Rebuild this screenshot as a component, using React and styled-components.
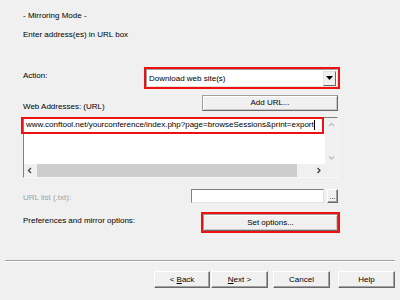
import React from "react";
import styled, { createGlobalStyle } from "styled-components";

const Global = createGlobalStyle`
  html, body { margin: 0; padding: 0; background: #f0f0f0; }
  body {
    font-family: "Liberation Sans", Arial, sans-serif;
    font-size: 8px;
    color: #000;
  }
  * { box-sizing: border-box; }
`;

const Page = styled.div`
  width: 400px;
  height: 300px;
  display: flex;
  flex-direction: column;
  overflow: hidden;
`;

const Content = styled.div`
  padding: 11px 0 0 23px;
  width: 338px;
  display: flex;
  flex-direction: column;
`;

const Text = styled.div`
  line-height: 10px;
  height: 10px;
  margin-top: ${(p) => p.$mt || 0}px;
  white-space: nowrap;
`;

const Row = styled.div`
  display: flex;
  justify-content: space-between;
  height: ${(p) => p.$h}px;
  margin-top: ${(p) => p.$mt}px;
`;

const Label = styled.div`
  white-space: nowrap;
  align-self: ${(p) => (p.$bottom ? "flex-end" : "flex-start")};
  line-height: ${(p) => p.$lh}px;
  color: ${(p) => (p.$disabled ? "#a0a0a0" : "#000")};
`;

const Combo = styled.div`
  width: 192px;
  height: 18px;
  background: #fff;
  border: 1px solid;
  border-color: #a0a0a0 #e3e3e3 #e3e3e3 #a0a0a0;
  outline: 2px solid #ee1111;
  display: flex;
  align-items: center;
  padding: 0 1px 0 2px;
`;

const ComboText = styled.div`
  flex: 1;
  white-space: nowrap;
`;

const DropButton = styled.div`
  width: 13px;
  height: 15px;
  background: #f0f0f0;
  border: 1px solid;
  border-color: #e3e3e3 #696969 #696969 #e3e3e3;
  display: flex;
  align-items: center;
  justify-content: center;
`;

const Button = styled.div`
  width: ${(p) => p.$w}px;
  height: ${(p) => p.$h || 17}px;
  margin-left: ${(p) => p.$ml || 0}px;
  background: #f0f0f0;
  border: 1px solid;
  border-color: #ffffff #696969 #696969 #ffffff;
  box-shadow: inset -1px -1px #a0a0a0;
  outline: ${(p) => (p.$hl ? "2px solid #ee1111" : "none")};
  outline-offset: ${(p) => (p.$hl ? "0px" : "0")};
  display: flex;
  align-items: center;
  justify-content: center;
  white-space: nowrap;
  line-height: 10px;
`;

const FlatButton = styled(Button)`
  border-color: #a0a0a0 #696969 #696969 #a0a0a0;
  box-shadow: inset 1px 1px #ffffff, inset -1px -1px #c8c8c8;
`;

const Edit = styled.div`
  position: relative;
  margin-top: 6px;
  width: 315px;
  height: 61px;
  background: #fff;
  border: 1px solid;
  border-color: #808080 #f8f8f8 #f8f8f8 #808080;
  display: grid;
  grid-template-columns: 1fr 12px;
  grid-template-rows: 1fr 13px;
`;

const EditText = styled.div`
  padding-left: 2px;
  line-height: 14px;
  white-space: nowrap;
  overflow: hidden;
  display: flex;
  align-items: flex-start;
`;

const Caret = styled.span`
  display: inline-block;
  width: 1px;
  height: 10px;
  margin-top: 2px;
  background: #000;
`;

const Highlight = styled.div`
  position: absolute;
  left: -3px;
  top: -1px;
  width: 303px;
  height: 17px;
  border: 2px solid #ee1111;
  pointer-events: none;
`;

const VScroll = styled.div`
  background: #f0f0f0;
  display: flex;
  flex-direction: column;
  justify-content: space-between;
`;

const HScroll = styled.div`
  background: #f0f0f0;
  display: flex;
  align-items: stretch;
`;

const ArrowBox = styled.div`
  width: ${(p) => p.$w || 12}px;
  height: ${(p) => p.$h || 13}px;
  display: flex;
  align-items: center;
  justify-content: center;
  flex: none;
`;

const Track = styled.div`
  flex: 1;
  display: flex;
  align-items: stretch;
`;

const Thumb = styled.div`
  margin-left: 1px;
  width: 260px;
  background: #cdcdcd;
`;

const Corner = styled.div`
  background: #f0f0f0;
`;

const Field = styled.div`
  width: 133px;
  height: 14px;
  background: #fff;
  border: 1px solid;
  border-color: #808080 #e3e3e3 #e3e3e3 #808080;
`;

const FieldGroup = styled.div`
  display: flex;
  gap: 3px;
`;

const SmallButton = styled(Button)`
  width: 11px;
  height: 14px;
  align-items: flex-end;
  padding-bottom: 2px;
  font-size: 7px;
  line-height: 7px;
`;

const Separator = styled.div`
  margin: 29px 5px 0 5px;
  height: 2px;
  border-top: 1px solid #a0a0a0;
  border-bottom: 1px solid #ffffff;
`;

const Footer = styled.div`
  display: flex;
  justify-content: flex-end;
  padding-right: 5px;
  margin-top: 9px;
`;

const U = styled.span`
  text-decoration: underline;
`;

const Chevron = ({ dir, color }) => {
  const paths = {
    up: "M1 4 L3.5 1.5 L6 4",
    down: "M1 1.5 L3.5 4 L6 1.5",
    left: "M4 1 L1.5 3.5 L4 6",
    right: "M1.5 1 L4 3.5 L1.5 6",
  };
  const vertical = dir === "up" || dir === "down";
  return (
    <svg width={vertical ? 7 : 6} height={vertical ? 6 : 7} viewBox={vertical ? "0 0 7 6" : "0 0 6 7"}>
      <path d={paths[dir]} fill="none" stroke={color} strokeWidth="1.3" />
    </svg>
  );
};

export default function App() {
  return (
    <Page>
      <Global />
      <Content>
        <Text>- Mirroring Mode -</Text>
        <Text $mt={9}>Enter address(es) in URL box</Text>

        <Row $h={18} $mt={29}>
          <Label $lh={14}>Action:</Label>
          <Combo>
            <ComboText>Download web site(s)</ComboText>
            <DropButton>
              <svg width="7" height="4" viewBox="0 0 7 4">
                <path d="M0 0 H7 L3.5 4 Z" fill="#000" />
              </svg>
            </DropButton>
          </Combo>
        </Row>

        <Row $h={16} $mt={8}>
          <Label $bottom $lh={8}>Web Addresses: (URL)</Label>
          <FlatButton $w={136} $h={16}>Add URL...</FlatButton>
        </Row>

        <Edit>
          <EditText>
            www.conftool.net/yourconference/index.php?page=browseSessions&amp;print=export
            <Caret />
          </EditText>
          <VScroll>
            <ArrowBox $w={12} $h={13}>
              <Chevron dir="up" color="#bfbfbf" />
            </ArrowBox>
            <ArrowBox $w={12} $h={13}>
              <Chevron dir="down" color="#bfbfbf" />
            </ArrowBox>
          </VScroll>
          <HScroll>
            <ArrowBox>
              <Chevron dir="left" color="#404040" />
            </ArrowBox>
            <Track>
              <Thumb />
            </Track>
            <ArrowBox>
              <Chevron dir="right" color="#404040" />
            </ArrowBox>
          </HScroll>
          <Corner />
          <Highlight />
        </Edit>

        <Row $h={14} $mt={11}>
          <Label $bottom $lh={10} $disabled>URL list (.txt):</Label>
          <FieldGroup>
            <Field />
            <SmallButton>...</SmallButton>
          </FieldGroup>
        </Row>

        <Row $h={17} $mt={11}>
          <Label $lh={14}>Preferences and mirror options:</Label>
          <FlatButton $w={135} $h={17} $hl>Set options...</FlatButton>
        </Row>
      </Content>

      <Separator />

      <Footer>
        <Button $w={56}>&lt;&nbsp;<U>B</U>ack</Button>
        <Button $w={57} $ml={1}><U>N</U>ext&nbsp;&gt;</Button>
        <Button $w={57} $ml={5}>Cancel</Button>
        <Button $w={57} $ml={8}>Help</Button>
      </Footer>
    </Page>
  );
}
